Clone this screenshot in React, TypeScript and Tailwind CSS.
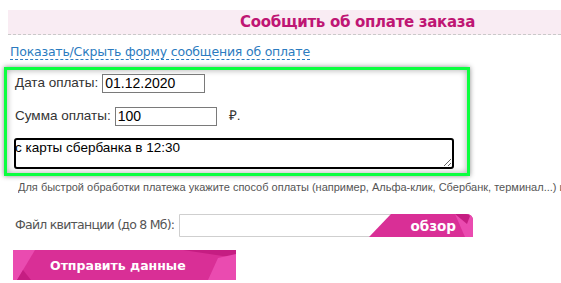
export default function App() {
  return (
    <div className="w-[561px] h-[283px] overflow-hidden bg-white font-['Liberation_Sans',Arial,sans-serif]">
      {/* Section header */}
      <div className="mt-[10px] ml-[8px] flex h-[25px] items-center justify-end border-b border-dashed border-[#c9c9c9] bg-[#f9ecf3] pr-[86px]">
        <h2 className="font-['DejaVu_Sans',Verdana,sans-serif] text-[15px] font-bold tracking-[-0.3px] text-[#bf1674]">
          Сообщить об оплате заказа
        </h2>
      </div>

      <div className="ml-[10px] mt-[4px] h-[17px]">
        <a className="border-b border-dashed border-[#2b7bc0] font-['DejaVu_Sans',Verdana,sans-serif] text-[12.5px] leading-[16px] tracking-[-0.2px] text-[#2b7bc0]">
          Показать/Скрыть форму сообщения об оплате
        </a>
      </div>

      {/* Highlighted block */}
      <div className="ml-[4px] mt-[11px] h-[109px] w-[466px] border-[3px] border-[#0bff3f] pl-[8px] pt-[4px] text-[13.5px] text-[#333] shadow-[0_0_5px_rgba(0,0,0,0.45),inset_0_0_6px_rgba(0,0,0,0.35)]">
        <div className="flex h-[19px] items-center">
          <span>Дата оплаты:</span>
          <input
            readOnly
            defaultValue="01.12.2020"
            className="ml-[4px] h-[19px] w-[103px] border border-[#7a7a7a] px-[2px] text-[14px] text-black outline-none"
          />
        </div>
        <div className="mt-[14px] flex h-[19px] items-center">
          <span>Сумма оплаты:</span>
          <input
            readOnly
            defaultValue="100"
            className="ml-[4px] h-[19px] w-[102px] border border-[#7a7a7a] px-[2px] text-[14px] text-black outline-none"
          />
          <span className="ml-[12px]">₽.</span>
        </div>
        <textarea
          readOnly
          defaultValue="с карты сбербанка в 12:30"
          className="-ml-[1px] mt-[12px] block h-[31px] w-[440px] rounded-[3px] border-2 border-black p-0 -indent-[1px] text-[13.5px] leading-[16px] text-black outline-none"
        />
      </div>

      <p className="ml-[18px] mt-[5px] w-[543px] overflow-hidden whitespace-nowrap text-[11px] leading-[13px] text-[#555]">
        Для быстрой обработки платежа укажите способ оплаты (например, Альфа-клик, Сбербанк, терминал...) и
      </p>

      {/* File row */}
      <div className="ml-[15px] mt-[20px] flex h-[23px] items-center">
        <span className="w-[164px] whitespace-nowrap font-['DejaVu_Sans',Verdana,sans-serif] text-[12.5px] tracking-[-0.75px] text-[#555]">
          Файл квитанции (до 8 Мб):
        </span>
        <div className="relative h-[23px] w-[294px] rounded-tr-[6px] border border-[#cfcfcf] bg-white">
          <svg className="absolute right-[-1px] top-[-1px]" width="104" height="23" viewBox="0 0 104 23">
            <path d="M22 0 H97 Q104 0 104 7 V23 H0 Z" fill="#d92f96" />
            <path d="M86 0 H97 Q104 0 104 7 V23 H96 Z" fill="#ea4bb0" />
            <path d="M86 0 H97 Q100 0 101 2 L98 10 Z" fill="#c51d82" />
          </svg>
          <span className="absolute right-[16px] top-0 font-['DejaVu_Sans',Verdana,sans-serif] text-[13.5px] font-bold leading-[22px] text-white">
            обзор
          </span>
        </div>
      </div>

      {/* Submit */}
      <button className="relative ml-[13px] mt-[13px] block h-[30px] w-[223px] overflow-hidden bg-[#d92f96] text-left">
        <svg className="absolute left-0 top-0" width="223" height="30" viewBox="0 0 223 30">
          <path d="M0 0 H22 L4 30 H0 Z" fill="#ea4bb0" />
          <path d="M10 20 L18 30 H4 Z" fill="#c51d82" />
          <path d="M170 0 H223 V8 Z" fill="#c51d82" />
          <path d="M205 8 L223 4 V30 H195 Z" fill="#ea4bb0" />
        </svg>
        <span className="relative ml-[37px] font-['DejaVu_Sans',Verdana,sans-serif] text-[12.5px] font-bold text-white">
          Отправить данные
        </span>
      </button>
    </div>
  )
}
